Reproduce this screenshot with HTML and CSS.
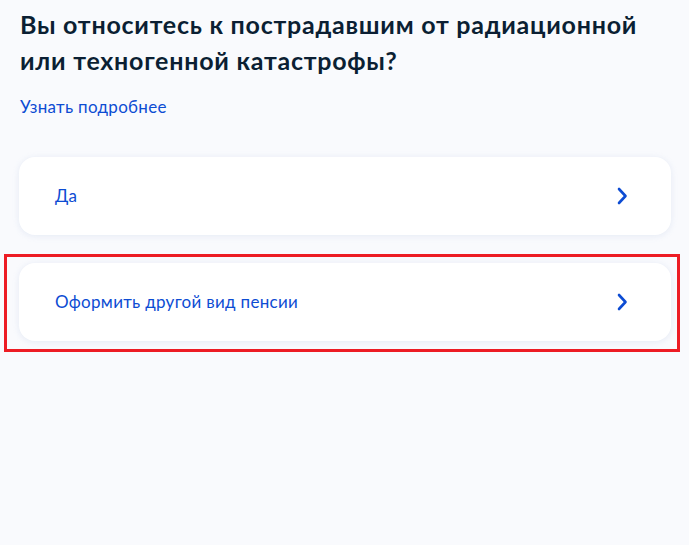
FILE: index.html
```html
<!DOCTYPE html>
<html lang="ru">
<head>
<meta charset="utf-8">
<title>Вопрос</title>
<link rel="stylesheet" href="styles.css">
</head>
<body>
<main class="page">
  <h1 class="title">Вы относитесь к пострадавшим от радиационной или техногенной катастрофы?</h1>
  <a class="more" href="#">Узнать подробнее</a>
  <div class="options">
    <a class="card" href="#">
      <span class="card-text">Да</span>
      <svg class="chev" width="11" height="18" viewBox="0 0 11 18"><path d="M2 2 L8.5 9 L2 16" fill="none" stroke="#0d4cd3" stroke-width="2.6" stroke-linecap="round" stroke-linejoin="round"/></svg>
    </a>
    <div class="highlight-wrap">
      <a class="card" href="#">
        <span class="card-text">Оформить другой вид пенсии</span>
        <svg class="chev" width="11" height="18" viewBox="0 0 11 18"><path d="M2 2 L8.5 9 L2 16" fill="none" stroke="#0d4cd3" stroke-width="2.6" stroke-linecap="round" stroke-linejoin="round"/></svg>
      </a>
      <div class="highlight"></div>
    </div>
  </div>
</main>
</body>
</html>
```

FILE: styles.css
```css
html, body {
  margin: 0;
  padding: 0;
}
body {
  background: #f9fafd;
  font-family: Lato, "Noto Sans", sans-serif;
  width: 689px;
  height: 545px;
  overflow: hidden;
}
.page {
  padding: 6px 18px 0 19px;
  display: flex;
  flex-direction: column;
}
.title {
  margin: 0 0 0 1px;
  font-size: 25px;
  line-height: 36px;
  font-weight: 700;
  color: #0b1f33;
  letter-spacing: 0.75px;
  max-width: 645px;
}
.more {
  margin: 17px 0 0 1px;
  font-size: 17px;
  line-height: 24px;
  letter-spacing: 0.3px;
  color: #0d4cd3;
  text-decoration: none;
  align-self: flex-start;
}
.options {
  margin-top: 38px;
  display: flex;
  flex-direction: column;
  gap: 28px;
  width: 652px;
}
.card {
  display: flex;
  align-items: center;
  justify-content: space-between;
  height: 78px;
  box-sizing: border-box;
  padding: 0 43px 0 36px;
  background: #ffffff;
  border-radius: 16px;
  box-shadow: 0 1px 6px rgba(205, 215, 235, 0.45);
  text-decoration: none;
}
.card-text {
  font-size: 17px;
  line-height: 24px;
  letter-spacing: 0.3px;
  color: #0d4cd3;
}
.chev {
  display: block;
}
.highlight-wrap {
  position: relative;
}
.highlight {
  position: absolute;
  left: -15px;
  top: -9px;
  width: 676px;
  height: 98px;
  box-sizing: border-box;
  border: 3px solid #ed1c24;
  pointer-events: none;
}
```
